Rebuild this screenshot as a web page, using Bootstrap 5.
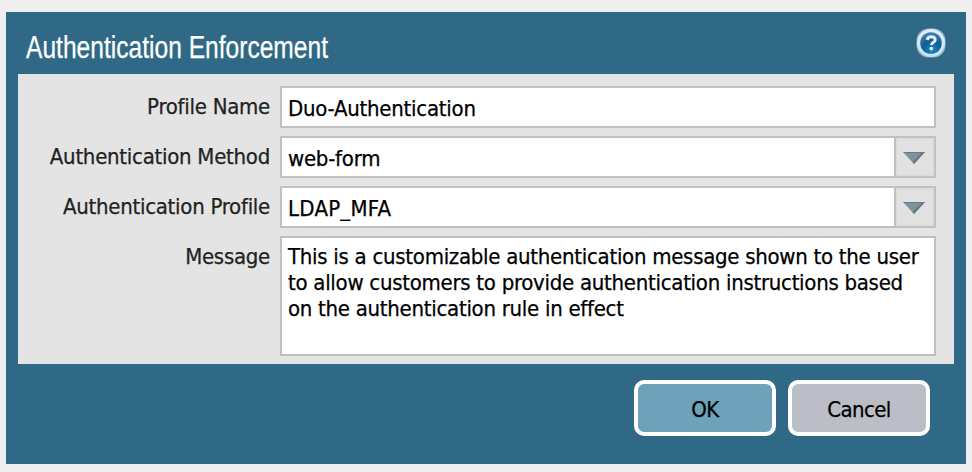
<!DOCTYPE html>
<html lang="en">
<head>
<meta charset="utf-8">
<meta name="viewport" content="width=device-width, initial-scale=1">
<title>Authentication Enforcement</title>
<link href="https://cdn.jsdelivr.net/npm/bootstrap@5.3.0/dist/css/bootstrap.min.css" rel="stylesheet">
<style>
body{background:#efefef;font-family:"DejaVu Sans Condensed","DejaVu Sans",sans-serif;font-stretch:condensed;font-size:22px;line-height:26px;color:#000;overflow:hidden;-webkit-text-stroke:.25px}
.dialog{width:960px;height:452px;margin:12px 0 0 6px;background:#306986;padding:0 12px}
.dialog-head{height:62px;padding:0 8px}
.dialog-title{font-family:"Liberation Sans",sans-serif;font-stretch:normal;font-size:31px;line-height:36px;font-weight:400;color:#fff;margin:18px 0 0;transform-origin:0 50%;transform:scaleX(.793);white-space:nowrap}
.help{width:30px;height:30px;margin-top:16px}
.panel{height:290px;background:#e4e4e4;padding:12px 18px 8px 0}
.panel .form-row{margin-bottom:8px}
.lbl{width:262px;flex:none;text-align:right;color:#222;line-height:26px;padding:8px 10px 0 0;letter-spacing:-.27px;white-space:nowrap}
.field,.field:focus{font:inherit;letter-spacing:-.25px;height:42px;border:2px solid #c1c1c1;border-radius:0;padding:2px 6px 0;color:#000;background:#fff;box-shadow:none}
#profile{letter-spacing:.25px}
.trigger{width:42px;flex:none;margin-left:-2px;border:2px solid #c1c1c1;border-radius:0;background:#e1e1e1;padding:0;box-shadow:inset 0 0 0 1px #dadada}
.trigger svg{display:block;margin:0 2px 0 0}
textarea.field,textarea.field:focus{height:120px;padding:6px 6px;line-height:26px;resize:none;overflow:hidden;letter-spacing:-.28px}
.dialog-foot{padding:16px 24px 0 0;gap:12px}
.act{width:142px;height:56px;border:4px solid #fff;border-radius:10px;font-size:22px;line-height:26px;padding:4px 0 0;color:#000;letter-spacing:-.6px}
.act-ok{background:#6da2ba}
.act-cancel{background:#bbbec7}
</style>
<script defer src="https://cdn.jsdelivr.net/npm/bootstrap@5.3.0/dist/js/bootstrap.bundle.min.js"></script>
</head>
<body>
<main class="dialog">
  <header class="dialog-head d-flex justify-content-between align-items-start">
    <h1 class="dialog-title">Authentication Enforcement</h1>
    <svg class="help" viewBox="0 0 30 30" role="img" aria-label="Help">
      <defs>
        <radialGradient id="ball" cx=".55" cy=".85" r=".85"><stop offset="0" stop-color="#1683bc"/><stop offset=".55" stop-color="#125f92"/><stop offset="1" stop-color="#4585ad"/></radialGradient>
        <linearGradient id="ring" x2="0" y2="1"><stop offset="0" stop-color="#e3eff9"/><stop offset="1" stop-color="#c9dff2"/></linearGradient>
      </defs>
      <rect x=".5" y=".5" width="29" height="29" rx="12" fill="#8eb1d3"/>
      <circle cx="15" cy="15" r="14" fill="url(#ring)"/>
      <circle cx="15" cy="15" r="10.8" fill="url(#ball)"/>
      <path d="M11.2 11.8C11.8 9.4 13.4 8.8 15.2 8.8C17.8 8.8 19.4 10.1 19.2 12.1C19 14.3 15.6 14.4 15.5 17" fill="none" stroke="#e2f1fb" stroke-width="3"/>
      <circle cx="15.3" cy="20.6" r="1.9" fill="#e2f1fb"/>
    </svg>
  </header>
  <form class="panel">
    <div class="form-row d-flex"><label class="lbl" for="name">Profile Name</label><div class="d-flex flex-grow-1"><input id="name" class="form-control field" value="Duo-Authentication"></div></div>
    <div class="form-row d-flex"><label class="lbl" for="method">Authentication Method</label><div class="d-flex flex-grow-1"><input id="method" class="form-control field" value="web-form"><button type="button" class="trigger d-flex align-items-center justify-content-center" aria-label="Open methods"><svg width="22" height="13" viewBox="0 0 22 13"><path d="M0 1H22L11 13Z" fill="#81929b"/><path d="M22 1L11 13L9.5 11L18.5 2H2L0 1Z" fill="#657a86"/></svg></button></div></div>
    <div class="form-row d-flex"><label class="lbl" for="profile">Authentication Profile</label><div class="d-flex flex-grow-1"><input id="profile" class="form-control field" value="LDAP_MFA"><button type="button" class="trigger d-flex align-items-center justify-content-center" aria-label="Open profiles"><svg width="22" height="13" viewBox="0 0 22 13"><path d="M0 1H22L11 13Z" fill="#81929b"/><path d="M22 1L11 13L9.5 11L18.5 2H2L0 1Z" fill="#657a86"/></svg></button></div></div>
    <div class="d-flex"><label class="lbl" for="message">Message</label><div class="d-flex flex-grow-1"><textarea id="message" class="form-control field">This is a customizable authentication message shown to the user
to allow customers to provide authentication instructions based
on the authentication rule in effect</textarea></div></div>
  </form>
  <footer class="dialog-foot d-flex justify-content-end">
    <button type="button" class="btn act act-ok">OK</button>
    <button type="button" class="btn act act-cancel">Cancel</button>
  </footer>
</main>
</body>
</html>
